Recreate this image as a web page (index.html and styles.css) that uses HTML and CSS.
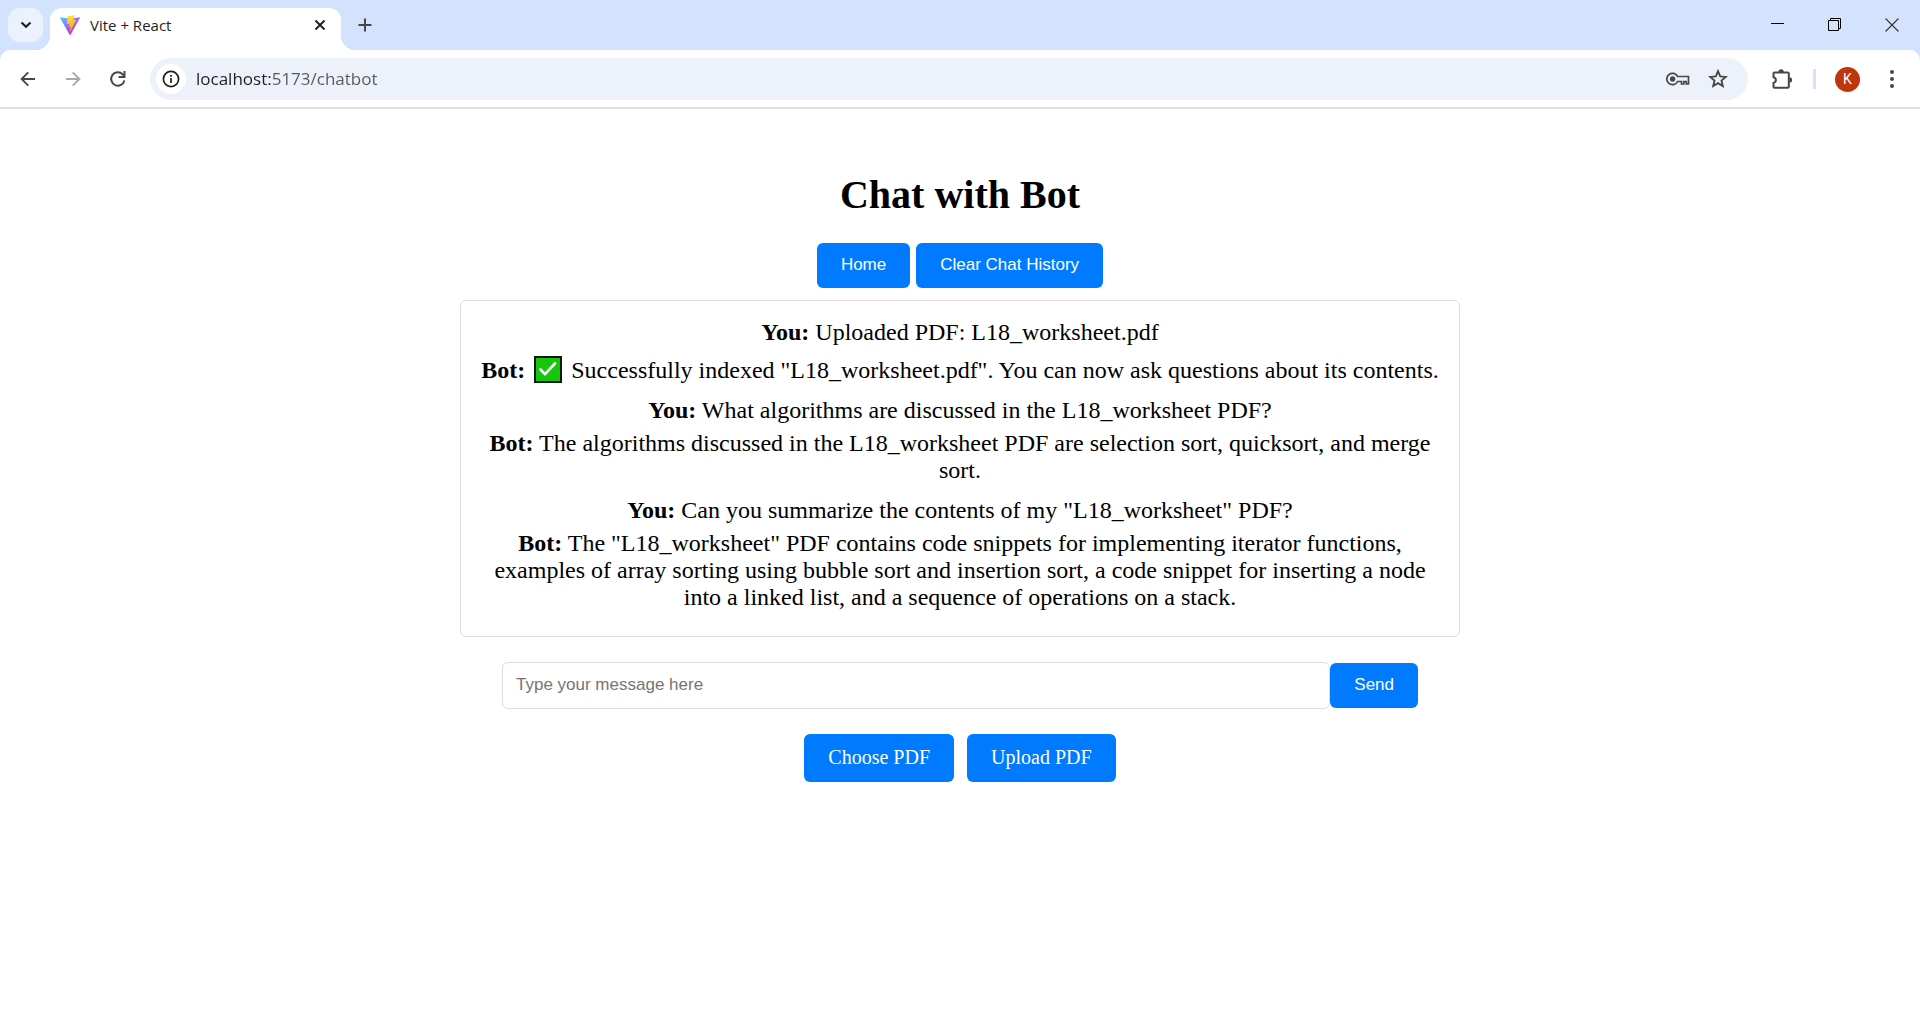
FILE: index.html
```html
<!DOCTYPE html>
<html lang="en">
<head>
<meta charset="utf-8">
<title>Vite + React</title>
<link rel="stylesheet" href="styles.css">
</head>
<body>
<header class="browser">
  <div class="tab-strip">
    <button class="tab-search" aria-label="Search tabs">
      <svg width="12" height="8" viewBox="0 0 12 8"><path d="M1.500 1.500l4.500 4.300 4.500-4.300" fill="none" stroke="#1f1f1f" stroke-width="2.2"/></svg>
    </button>
    <div class="tab">
      <svg width="20" height="20" viewBox="0 0 256 257" aria-hidden="true">
        <defs>
          <linearGradient id="vite-back" x1="0" y1="0" x2="0.6" y2="0.8"><stop offset="0" stop-color="#41d1ff"/><stop offset="1" stop-color="#bd34fe"/></linearGradient>
          <linearGradient id="vite-bolt" x1="0.43" y1="0.02" x2="0.51" y2="0.89"><stop offset="0" stop-color="#ffea83"/><stop offset="0.08" stop-color="#ffdd35"/><stop offset="1" stop-color="#ffa800"/></linearGradient>
        </defs>
        <path fill="url(#vite-back)" d="M255.2 37.9 134.9 252.98c-2.5 4.44-8.9 4.47-11.4.05L.87 37.96c-2.75-4.8 1.37-10.65 6.82-9.67l120.39 21.5c.77.14 1.55.14 2.32 0L248.3 28.3c5.43-.99 9.57 4.8 6.9 9.6z"/>
        <path fill="url(#vite-bolt)" d="M185.4.06 96.4 17.5a3.27 3.27 0 0 0-2.63 3.01l-5.48 92.46a3.27 3.27 0 0 0 4 3.38l24.8-5.72c2.3-.54 4.4 1.5 3.93 3.83l-7.37 36.06c-.5 2.43 1.8 4.5 4.16 3.79l15.3-4.65c2.37-.72 4.66 1.37 4.16 3.8l-11.7 56.6c-.73 3.54 3.98 5.47 5.94 2.43l1.3-2.02 72.5-144.7c1.2-2.43-.88-5.2-3.54-4.7l-25.5 4.93c-2.4.46-4.43-1.77-3.76-4.1L189.2 4c.68-2.35-1.38-4.6-3.8-3.94z"/>
      </svg>
      <span class="tab-title">Vite + React</span>
      <button class="tab-close" aria-label="Close tab">
        <svg width="12" height="12" viewBox="0 0 12 12"><path d="M1.5 1.5l9 9m0-9l-9 9" stroke="#1f1f1f" stroke-width="1.9"/></svg>
      </button>
    </div>
    <button class="new-tab" aria-label="New tab">
      <svg width="14" height="14" viewBox="0 0 14 14"><path d="M7 .5v13M.5 7h13" stroke="#474747" stroke-width="2"/></svg>
    </button>
    <div class="window-controls">
      <button aria-label="Minimize"><svg width="14" height="14" viewBox="0 0 14 14"><path d="M0 5.500h13" stroke="#000"/></svg></button>
      <button aria-label="Restore"><svg width="14" height="14" viewBox="0 0 14 14"><path d="M.5 2.5h10v10H.5zM2.500 2.500v-2h10v10h-2" fill="none" stroke="#000"/></svg></button>
      <button aria-label="Close"><svg width="14" height="14" viewBox="0 0 14 14"><path d="M.5.5l13 13m0-13l-13 13" stroke="#333" stroke-width="1.1"/></svg></button>
    </div>
  </div>
  <div class="toolbar">
    <nav class="history" aria-label="Navigation">
      <button aria-label="Back"><svg width="16" height="16" viewBox="0 0 16 16"><path d="M15 8H2M8.300 1.300L1.600 8l6.700 6.700" fill="none" stroke="#474747" stroke-width="1.900"/></svg></button>
      <button aria-label="Forward"><svg width="16" height="16" viewBox="0 0 16 16"><path d="M1 8h13M7.700 1.300L14.400 8l-6.700 6.700" fill="none" stroke="#a8a8a8" stroke-width="1.900"/></svg></button>
      <button aria-label="Reload"><svg width="18" height="18" viewBox="0 0 18 18"><path d="M15.400 10.400A6.700 6.700 0 1 1 13.600 4.200L15 5.600" fill="none" stroke="#474747" stroke-width="2"/><path d="M15.500 1v6H9.600" fill="none" stroke="#474747" stroke-width="2"/></svg></button>
    </nav>
    <div class="address-bar">
      <button class="site-info" aria-label="Site information">
        <svg width="18" height="18" viewBox="0 0 18 18"><circle cx="9" cy="9" r="7.600" fill="none" stroke="#1f1f1f" stroke-width="1.700"/><path d="M9 8v5M9 5v1.800" stroke="#1f1f1f" stroke-width="1.700"/></svg>
      </button>
      <input class="address" type="text" aria-label="Address" value="localhost:5173/chatbot">
      <button aria-label="Passwords">
        <svg width="24" height="16" viewBox="0 0 24 16"><path d="M11.600 5.500H22.500V13h-2.300V10.500h-2.400V13h-2.300v-2.500h-3.900A5.700 5.700 0 1 1 11.600 5.500z" fill="none" stroke="#474747" stroke-width="1.700"/><circle cx="6.600" cy="8" r="2.700" fill="#474747"/></svg>
      </button>
      <button aria-label="Bookmark this tab">
        <svg width="20" height="20" viewBox="0 0 20 20"><path d="M10 2.200l2.200 5.200 5.600.5-4.300 3.700 1.300 5.500L10 14.200l-4.800 2.900 1.300-5.500-4.300-3.700 5.600-.5z" fill="none" stroke="#474747" stroke-width="1.900"/></svg>
      </button>
    </div>
    <div class="tools">
      <button aria-label="Extensions">
        <svg width="22" height="22" viewBox="0 0 22 22"><path d="M3.500 4.500h13.300a1 1 0 0 1 1 1v13.300a1 1 0 0 1-1 1H3.500a1 1 0 0 1-1-1v-3.900a2.900 2.900 0 0 0 0-5.700V5.500a1 1 0 0 1 1-1z" fill="none" stroke="#474747" stroke-width="2"/><path d="M7.400 4a2.700 2.700 0 0 1 5.400 0zM18.500 9.300a2.600 2.600 0 0 1 0 5.200z" fill="#474747"/></svg>
      </button>
      <span class="divider"></span>
      <button class="profile" aria-label="Profile K">K</button>
      <button aria-label="Menu">
        <svg width="6" height="20" viewBox="0 0 6 20"><g fill="#474747"><circle cx="3" cy="3" r="2"/><circle cx="3" cy="10" r="2"/><circle cx="3" cy="17" r="2"/></g></svg>
      </button>
    </div>
  </div>
</header>
<main class="page">
  <h1>Chat with Bot</h1>
  <div class="actions">
    <button class="btn">Home</button>
    <button class="btn">Clear Chat History</button>
  </div>
  <section class="chat" aria-label="Conversation">
    <div class="exchange">
      <p><strong>You:</strong> Uploaded PDF: L18_worksheet.pdf</p>
      <p><strong>Bot:</strong> <svg class="emoji" width="28" height="27" viewBox="0 0 28 27" role="img" aria-label="Done"><path d="M1 1h26v25H1z" fill="#16c60c" stroke="#0a1a0a" stroke-width="2"/><path d="M6.500 13.500l4.500 4.700L21 7.500" fill="none" stroke="#fff" stroke-width="2.600" stroke-linecap="round"/></svg> Successfully indexed "L18_worksheet.pdf". You can now ask questions about its contents.</p>
    </div>
    <div class="exchange">
      <p><strong>You:</strong> What algorithms are discussed in the L18_worksheet PDF?</p>
      <p><strong>Bot:</strong> The algorithms discussed in the L18_worksheet PDF are selection sort, quicksort, and merge sort.</p>
    </div>
    <div class="exchange">
      <p><strong>You:</strong> Can you summarize the contents of my "L18_worksheet" PDF?</p>
      <p><strong>Bot:</strong> The "L18_worksheet" PDF contains code snippets for implementing iterator functions, examples of array sorting using bubble sort and insertion sort, a code snippet for inserting a node into a linked list, and a sequence of operations on a stack.</p>
    </div>
  </section>
  <form class="composer">
    <input class="message" type="text" placeholder="Type your message here" aria-label="Message">
    <button class="btn" type="button">Send</button>
  </form>
  <div class="uploads">
    <button class="btn btn-serif">Choose PDF</button>
    <button class="btn btn-serif">Upload PDF</button>
  </div>
</main>
</body>
</html>
```
FILE: styles.css
```css
* { box-sizing: border-box; }

body {
  margin: 0;
  background: #fff;
  color: #000;
  font-family: "Liberation Serif", serif;
  font-size: 24px;
  line-height: 27px;
}

button {
  display: flex;
  align-items: center;
  justify-content: center;
  padding: 0;
  border: 0;
  background: none;
  cursor: pointer;
}

svg { flex: none; }

/* Browser frame */
.browser {
  background: #d3e3fd;
  border-bottom: 2px solid #e0e0e0;
  font-family: "Open Sans", sans-serif;
}

.tab-strip {
  display: flex;
  height: 50px;
  padding: 8px 0 0 8px;
}

.tab-search {
  width: 35px;
  height: 34px;
  margin-right: 7px;
  border-radius: 12px;
  background: #ecf2fd;
}

.tab {
  position: relative;
  display: flex;
  align-items: center;
  width: 291px;
  padding: 0 13px 8px 10px;
  border-radius: 12px 12px 0 0;
  background: #fff;
}

.tab::before,
.tab::after {
  content: "";
  position: absolute;
  bottom: 0;
  width: 14px;
  height: 14px;
}

.tab::before {
  right: 100%;
  background: radial-gradient(circle at 0 0, transparent 14px, #fff 14px);
}

.tab::after {
  left: 100%;
  background: radial-gradient(circle at 100% 0, transparent 14px, #fff 14px);
}

.tab-title {
  flex: 1;
  margin-left: 10px;
  color: #1f1f1f;
  font-size: 15px;
  line-height: 20px;
}

.tab-close {
  width: 16px;
  height: 16px;
}

.new-tab {
  width: 34px;
  height: 34px;
  margin-left: 7px;
}

.window-controls {
  display: flex;
  margin-left: auto;
}

.window-controls button {
  width: 57px;
  height: 34px;
}

.toolbar {
  display: flex;
  align-items: center;
  padding: 8px 11px 7px 11px;
  border-radius: 10px 10px 0 0;
  background: #fff;
}

.history {
  display: flex;
  gap: 11px;
  margin-right: 15px;
}

.history button,
.tools button {
  width: 34px;
  height: 34px;
}

.address-bar {
  display: flex;
  flex: 1;
  align-items: center;
  gap: 10px;
  height: 42px;
  padding: 0 15px 0 6px;
  border-radius: 21px;
  background: #ecf1fa;
}

.address-bar button {
  width: 30px;
  height: 30px;
}

.address-bar .site-info {
  border-radius: 50%;
  background: #fff;
}

/* The host is darker than the rest of the address */
.address {
  flex: 1;
  min-width: 0;
  padding: 0;
  border: 0;
  outline: 0;
  background: linear-gradient(to right, #1f1f1f 76px, #575757 76px);
  background-clip: text;
  color: transparent;
  font-family: inherit;
  font-size: 17px;
  line-height: 24px;
}

.tools {
  display: flex;
  align-items: center;
  margin-left: 17px;
}

.divider {
  width: 3px;
  height: 20px;
  margin: 0 19px 0 14px;
  background: #d3e3fd;
}

.tools .profile {
  width: 25px;
  height: 25px;
  margin-right: 15px;
  border-radius: 50%;
  background: #bf360c;
  color: #fff;
  font-family: Roboto, sans-serif;
  font-size: 14px;
}

/* Chat page */
.page {
  display: flex;
  flex-direction: column;
  align-items: center;
  padding: 63px 20px 25px;
}

h1 {
  margin: 0 0 25px;
  font-size: 40px;
  line-height: 46px;
}

.actions {
  display: flex;
  gap: 6px;
  margin-bottom: 12px;
}

.btn {
  padding: 12px 24px 14px;
  border-radius: 6px;
  background: #007bff;
  color: #fff;
  font-family: "Liberation Sans", sans-serif;
  font-size: 17px;
  line-height: 19px;
}

.btn-serif {
  font-family: inherit;
  font-size: 20px;
  line-height: 22px;
}

.chat {
  display: flex;
  flex-direction: column;
  gap: 13px;
  width: 100%;
  max-width: 1000px;
  padding: 18px 19px 25px;
  border: 1px solid #ddd;
  border-radius: 6px;
  text-align: center;
}

.exchange p { margin: 0; }
.exchange p + p { margin-top: 6px; }

.emoji {
  margin: 4px 3px 0;
  vertical-align: -5px;
}

.composer {
  display: flex;
  align-items: center;
  width: 100%;
  max-width: 916px;
  margin: 25px 0;
}

.message {
  flex: 1;
  min-width: 0;
  padding: 12px 13px 14px;
  border: 1px solid #ddd;
  border-radius: 6px;
  font-family: "Liberation Sans", sans-serif;
  font-size: 17px;
  line-height: 19px;
}

.message::placeholder { color: #757575; }

.uploads {
  display: flex;
  gap: 13px;
}
```
